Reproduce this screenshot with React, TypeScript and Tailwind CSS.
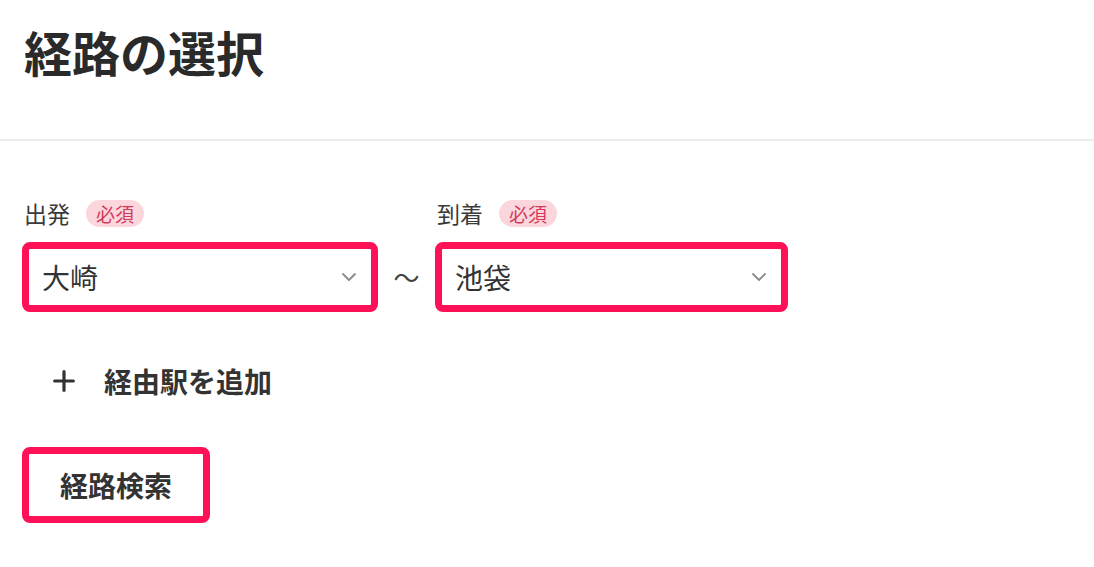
import { ChevronDown, Plus } from "lucide-react";

type StationSelectProps = {
  label: string;
  value: string;
  width: string;
};

function RequiredBadge() {
  return (
    <span className="inline-flex h-[27px] items-center rounded-full bg-[#fcd6dd] px-[10px] text-[19px] leading-none text-[#d23a5c]">
      必須
    </span>
  );
}

function StationSelect({ label, value, width }: StationSelectProps) {
  return (
    <div className="flex flex-col">
      <div className="ml-[2px] flex h-[28px] items-center gap-[16px]">
        <span className="text-[23px] leading-none text-[#3a3a3a]">{label}</span>
        <RequiredBadge />
      </div>
      <div
        className={`mt-[15px] flex h-[70px] items-center justify-between rounded-[8px] border-[7px] border-[#ff1158] bg-white pl-[13px] pr-[10px] ${width}`}
      >
        <span className="text-[28px] leading-none text-[#333]">{value}</span>
        <ChevronDown size={24} strokeWidth={1.8} className="text-[#8a8a8a]" />
      </div>
    </div>
  );
}

export default function App() {
  return (
    <div
      className="min-h-[567px] w-full bg-white"
      style={{ fontFamily: '"Noto Sans CJK JP", "Noto Sans", sans-serif' }}
    >
      <header className="h-[141px] border-b-2 border-[#ececec] px-6 pt-[27px]">
        <h1 className="text-[48px] font-bold leading-none text-[#2a2a2a]">
          経路の選択
        </h1>
      </header>

      <main className="px-[22px] pt-[58px]">
        <div className="flex items-end">
          <StationSelect label="出発" value="大崎" width="w-[356px]" />
          <div className="flex h-[70px] w-[57px] items-center justify-center pb-[2px] text-[26px] text-[#444]">
            〜
          </div>
          <StationSelect label="到着" value="池袋" width="w-[353px]" />
        </div>

        <button
          type="button"
          className="mt-[49px] flex h-[40px] items-center gap-[24px] pl-[26px] text-[28px] font-bold leading-none text-[#333]"
        >
          <Plus size={32} strokeWidth={2.4} className="text-[#333]" />
          経由駅を追加
        </button>

        <button
          type="button"
          className="mt-[46px] flex h-[76px] w-[188px] items-center justify-center rounded-[8px] border-[7px] border-[#ff1158] bg-white text-[28px] font-bold leading-none text-[#333]"
        >
          経路検索
        </button>
      </main>
    </div>
  );
}
